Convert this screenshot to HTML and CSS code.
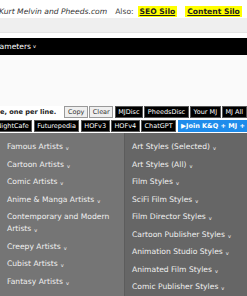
FILE: index.html
```html
<!DOCTYPE html>
<html lang="en">
<head>
    <meta charset="UTF-8">
    <meta name="viewport" content="width=device-width, initial-scale=1.0">
    <title>Prompt Builder</title>
    <link rel="stylesheet" href="styles.css">
</head>
<body>
    <div class="credits">
        <span class="by">Kurt Melvin and Pheeds.com</span>
        <span class="also">Also:</span>
        <a class="silo" href="#">SEO Silo</a>
        <a class="silo" href="#">Content Silo</a>
    </div>
    <div class="band"></div>

    <div class="section-bar">
        <span class="section-title">Parameters</span><span class="caret">v</span>
    </div>
    <div class="input-area"></div>

    <div class="toolbar">
        <span class="hint">e, one per line.</span>
        <button class="btn light">Copy</button>
        <button class="btn light">Clear</button>
        <button class="btn">MJDisc</button>
        <button class="btn">PheedsDisc</button>
        <button class="btn">Your MJ</button>
        <button class="btn">MJ All</button>
    </div>
    <div class="toolbar">
        <button class="btn cut-left">NightCafe</button>
        <button class="btn">Futurepedia</button>
        <button class="btn">HOFv3</button>
        <button class="btn">HOFv4</button>
        <button class="btn">ChatGPT</button>
        <button class="btn join">&#9654;Join K&amp;Q + MJ + Pheeds</button>
    </div>

    <div class="menu">
        <ul class="menu-col left">
            <li>Famous Artists<span class="caret">v</span></li>
            <li>Cartoon Artists<span class="caret">v</span></li>
            <li>Comic Artists<span class="caret">v</span></li>
            <li>Anime &amp; Manga Artists<span class="caret">v</span></li>
            <li>Contemporary and Modern Artists<span class="caret">v</span></li>
            <li>Creepy Artists<span class="caret">v</span></li>
            <li>Cubist Artists<span class="caret">v</span></li>
            <li>Fantasy Artists<span class="caret">v</span></li>
        </ul>
        <ul class="menu-col right">
            <li>Art Styles (Selected)<span class="caret">v</span></li>
            <li>Art Styles (All)<span class="caret">v</span></li>
            <li>Film Styles<span class="caret">v</span></li>
            <li>SciFi Film Styles<span class="caret">v</span></li>
            <li>Film Director Styles<span class="caret">v</span></li>
            <li>Cartoon Publisher Styles<span class="caret">v</span></li>
            <li>Animation Studio Styles<span class="caret">v</span></li>
            <li>Animated Film Styles<span class="caret">v</span></li>
            <li>Comic Publisher Styles<span class="caret">v</span></li>
        </ul>
    </div>
</body>
</html>
```

FILE: styles.css
```css
body {
    font-family: 'DejaVu Sans', Verdana, sans-serif;
    margin: 0;
    background-color: #fff;
    overflow: hidden;
}
.credits {
    display: flex;
    align-items: center;
    height: 13px;
    padding-top: 5px;
    font-size: 7.6px;
    white-space: nowrap;
    color: #333;
}
.by {
    font-style: italic;
    margin-left: -1px;
}
.also {
    margin-left: 8px;
    color: #444;
}
.silo {
    background-color: #ffff00;
    color: #222;
    font-weight: bold;
    padding: 1px 2px;
    margin-left: 4px;
}
.silo + .silo {
    margin-left: 8px;
}
.band {
    height: 14px;
    background-color: #efefef;
    border-bottom: 1px solid #e4e4e4;
    margin-bottom: 5px;
}
.section-bar {
    background-color: #000;
    color: #fff;
    height: 17px;
    display: flex;
    align-items: center;
    font-size: 7.6px;
    white-space: nowrap;
}
.section-title {
    margin-left: -12.4px;
}
.input-area {
    height: 51px;
    background-color: #fafafa;
}
.toolbar {
    display: flex;
    gap: 1.4px;
    height: 12px;
    white-space: nowrap;
    overflow: hidden;
    margin-bottom: 1.5px;
}
.hint {
    font-size: 6.6px;
    font-weight: bold;
    color: #222;
    line-height: 12px;
    width: 63px;
    flex-shrink: 0;
}
.btn {
    font-family: 'DejaVu Sans', Verdana, sans-serif;
    font-size: 6.5px;
    line-height: 10px;
    background-color: #000;
    color: #fff;
    border: 1px solid #555;
    padding: 0 2.5px;
    margin: 0;
    flex-shrink: 0;
}
.btn.light {
    background-color: #efefef;
    color: #333;
    border-color: #999;
}
.cut-left {
    margin-left: -7px;
}
.join {
    background-color: #1e8ceb;
    border-color: #1e8ceb;
    font-weight: bold;
}
.menu {
    display: grid;
    grid-template-columns: 124px 1fr;
    height: 170px;
}
.menu-col {
    list-style: none;
    margin: 0;
    padding: 5.25px 0 0 0;
}
.menu-col.left {
    background-color: #757575;
}
.menu-col.right {
    background-color: #666;
    border-left: 1px solid #5c5c5c;
}
.menu-col li {
    font-size: 7.6px;
    line-height: 12px;
    padding: 2.75px 7px;
    color: #f0f0f0;
}
.caret {
    font-size: 5px;
    line-height: 1;
    margin-left: 3px;
    vertical-align: -1px;
}
.section-bar .caret {
    margin-left: 2px;
}
```
